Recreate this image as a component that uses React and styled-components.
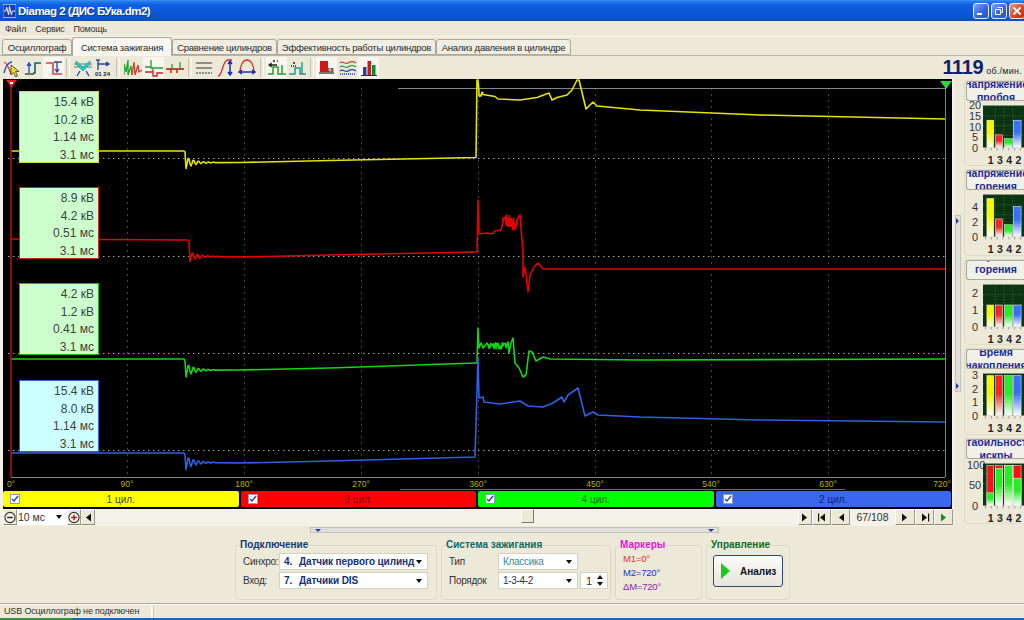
import React from "react";
import styled, { createGlobalStyle } from "styled-components";

const UI_FONT = '"Liberation Sans", Arial, sans-serif';

const GlobalStyle = createGlobalStyle`
  html, body {
    margin: 0;
    padding: 0;
    background: #ece9d8;
    overflow: hidden;
  }
  * { box-sizing: border-box; }
`;

const Window = styled.div`
  width: 1024px;
  height: 620px;
  display: flex;
  flex-direction: column;
  background: #ece9d8;
  font-family: ${UI_FONT};
  font-size: 10px;
  color: #222;
  overflow: hidden;
`;

/* title bar */
const TitleBar = styled.div`
  height: 21px;
  flex: none;
  display: flex;
  align-items: center;
  padding: 0 0 0 3px;
  background: linear-gradient(180deg, #3c92f5 0, #1f74ee 2px, #0f5fe2 5px, #0b57d8 14px, #0a4ec8 100%);
`;
const TitleText = styled.div`
  margin-left: 2px;
  color: #fff;
  font-weight: 700;
  font-size: 11.5px;
  letter-spacing: -0.5px;
  white-space: nowrap;
  flex: 1;
  text-shadow: 1px 1px 0 #0a3a9a;
`;
const WinButtons = styled.div`
  display: flex;
  gap: 2px;
  margin-right: -1px;
`;
const WinButton = styled.div`
  width: 16px;
  height: 16px;
  border: 1px solid #e8eefc;
  border-radius: 3px;
  display: flex;
  align-items: center;
  justify-content: center;
  background: ${(p) =>
    p.$close
      ? "linear-gradient(135deg, #ee9a80, #d8431c 60%, #c03010)"
      : "linear-gradient(135deg, #7ea6f0, #2f62dc 60%, #2a55c8)"};
`;

/* menu */
const MenuBar = styled.div`
  height: 16px;
  flex: none;
  display: flex;
  align-items: center;
  padding: 1px 0 0 5px;
  gap: 9px;
  border-bottom: 1px solid #f8f6ee;
`;
const MenuItem = styled.span`
  font-size: 9px;
  letter-spacing: -0.25px;
  color: #333;
`;

/* tabs */
const TabStrip = styled.div`
  height: 19px;
  flex: none;
  display: flex;
  align-items: flex-end;
  padding-left: 2px;
  border-bottom: 1px solid #b8b5a4;
`;
const Tab = styled.div`
  width: ${(p) => p.$w}px;
  height: ${(p) => (p.$active ? 19 : 16)}px;
  display: flex;
  align-items: center;
  justify-content: center;
  font-size: 9.5px;
  letter-spacing: -0.25px;
  color: #2a2a2a;
  background: ${(p) => (p.$active ? "#f8f7f0" : "#f0eee3")};
  border: 1px solid #aca899;
  border-bottom: ${(p) => (p.$active ? "none" : "1px solid #aca899")};
  border-radius: 3px 3px 0 0;
  margin-bottom: ${(p) => (p.$active ? -1 : 0)}px;
  white-space: nowrap;
`;

/* toolbar */
const Toolbar = styled.div`
  height: 23px;
  flex: none;
  display: flex;
  align-items: center;
  padding-left: 1px;
`;
const ToolButton = styled.div`
  width: 21px;
  height: 21px;
  display: flex;
  align-items: center;
  justify-content: center;
  background: ${(p) => (p.$active ? "#f7f6f0" : "transparent")};
`;
const ToolSep = styled.div`
  width: ${(p) => p.$w}px;
  height: 19px;
  display: flex;
  justify-content: center;
  &::after {
    content: "";
    width: 2px;
    height: 100%;
    border-left: 1px solid #c6c3b2;
    border-right: 1px solid #fbfaf4;
  }
`;
const Rpm = styled.div`
  margin-left: auto;
  margin-right: 2px;
  display: flex;
  align-items: baseline;
  gap: 3px;
`;
const RpmValue = styled.span`
  font-size: 20px;
  font-weight: 700;
  color: #10206e;
  letter-spacing: -0.4px;
`;
const RpmUnit = styled.span`
  font-size: 9px;
  letter-spacing: 0.25px;
  color: #223;
`;

/* main area */
const MainRow = styled.div`
  height: 447px;
  flex: none;
  display: flex;
`;
const ChartColumn = styled.div`
  width: 954px;
  flex: none;
  padding-left: 3px;
  display: flex;
  flex-direction: column;
  background: #f3f1e8;
`;
const Plot = styled.div`
  position: relative;
  width: 949px;
  height: 411px;
  flex: none;
  background: #000;
  svg { display: block; }
`;
const InfoBox = styled.div`
  position: absolute;
  left: 16px;
  top: ${(p) => p.$top}px;
  width: 80px;
  height: 72px;
  padding: 2px 4px 0 0;
  background: ${(p) => p.$bg};
  border: 1px solid ${(p) => p.$color};
  text-align: right;
  font-size: 12px;
  line-height: 17.7px;
  color: #404040;
`;
const AxisLabel = styled.text`
  font-family: ${UI_FONT};
  font-size: 8.5px;
  fill: #b5b500;
  text-anchor: middle;
`;

const ChannelBar = styled.div`
  width: 949px;
  height: 19px;
  flex: none;
  display: flex;
  gap: 2px;
  padding: 1px 1px 2px 0;
  background: #000;
`;
const Channel = styled.div`
  flex: 1;
  position: relative;
  display: flex;
  align-items: center;
  justify-content: center;
  background: ${(p) => p.$color};
  border-radius: 2px;
  font-size: 10px;
  color: ${(p) => p.$text};
`;
const Check = styled.div`
  position: absolute;
  left: 7px;
  top: 3px;
  width: 10px;
  height: 10px;
  background: #fff;
  border: 1px solid #8a9ac0;
  display: flex;
  align-items: center;
  justify-content: center;
`;

const PlayRow = styled.div`
  height: 16px;
  flex: none;
  display: flex;
  align-items: stretch;
  width: 950px;
`;
const PlayButton = styled.div`
  width: ${(p) => p.$w || 14}px;
  flex: none;
  display: flex;
  align-items: center;
  justify-content: center;
  background: #ece9d8;
  border: 1px solid;
  border-color: #fff #9c9a8a #8a8878 #fff;
`;
const TimeSelect = styled.div`
  width: 50px;
  flex: none;
  display: flex;
  align-items: center;
  justify-content: space-between;
  padding: 0 5px 0 1px;
  background: #fff;
  font-size: 10.5px;
  color: #333;
`;
const SliderTrack = styled.div`
  flex: 1;
  position: relative;
`;
const SliderThumb = styled.div`
  width: 13px;
  height: 14px;
  background: #ece9d8;
  border: 1px solid;
  border-color: #fff #777 #777 #fff;
`;
const FrameCount = styled.div`
  width: 45px;
  flex: none;
  display: flex;
  align-items: center;
  justify-content: center;
  font-size: 10.5px;
  color: #333;
`;

const VSplit = styled.div`
  align-self: center;
  width: 6px;
  height: 177px;
  margin: 1px 3px 0 1px;
  flex: none;
  padding: 2px 0;
  background: #dfdedb;
  border: 1px solid #c4c2b4;
  display: flex;
  flex-direction: column;
  justify-content: space-between;
`;
const VSplitArrow = styled.div`
  width: 0;
  height: 0;
  border-top: 3px solid transparent;
  border-bottom: 3px solid transparent;
  border-left: 3px solid #2a3aa0;
`;

const SidePanel = styled.div`
  flex: 1;
  display: flex;
  flex-direction: column;
  gap: 3px;
  padding-top: 1px;
  overflow: hidden;
`;
const GaugeCard = styled.div`
  height: 86.4px;
  flex: none;
  padding-left: 1px;
  border: 1px solid #dedbc9;
  border-right: none;
  border-radius: 4px 0 0 4px;
`;
const GaugeHeader = styled.div`
  width: 59px;
  height: 20px;
  display: flex;
  flex-direction: column;
  align-items: center;
  justify-content: center;
  overflow: hidden;
  background: #f2f1e9;
  border: 1px solid #a9a795;
  border-right: none;
  border-radius: 3px 0 0 3px;
  font-size: 10.5px;
  font-weight: 700;
  line-height: 13px;
  color: #1c2a98;
  span { flex: none; white-space: nowrap; }
`;
const GaugeBody = styled.div`
  display: flex;
  margin: 4px 0 0 1px;
`;
const AxisColumn = styled.div`
  width: 16px;
  height: 43px;
  flex: none;
  display: flex;
  flex-direction: column;
  justify-content: space-between;
  padding-top: ${(p) => p.$top || 0}px;
  font-size: 11px;
  color: #333;
  text-align: center;
  span { height: 0; line-height: 0; }
`;
const BarLabels = styled.div`
  display: grid;
  grid-template-columns: repeat(4, 9.3px);
  margin: 3px 0 0 20px;
  font-size: 10.5px;
  font-weight: 700;
  line-height: 12px;
  text-align: center;
  color: #222;
`;

/* bottom area */
const BottomArea = styled.div`
  height: 77px;
  flex: none;
  display: flex;
  flex-direction: column;
`;
const HSplit = styled.div`
  width: 409px;
  height: 6px;
  margin: 1px 0 0 310px;
  flex: none;
  background: #dfdedb;
  border: 1px solid #c4c2b4;
  display: flex;
  align-items: center;
  justify-content: space-between;
  padding: 0 4px;
`;
const SplitArrow = styled.div`
  width: 0;
  height: 0;
  border-left: 3px solid transparent;
  border-right: 3px solid transparent;
  border-top: 3px solid #2a3aa0;
`;
const GroupRow = styled.div`
  display: flex;
  gap: 4px;
  padding: 6px 0 0 235px;
`;
const Group = styled.fieldset`
  width: ${(p) => p.$w}px;
  height: 61px;
  margin: 0;
  padding: 2px 5px 0 7px;
  border: 1px solid #dad7c5;
  border-radius: 4px;
  box-shadow: inset 0 0 0 1px #efedde;
  min-width: 0;
`;
const GroupTitle = styled.legend`
  padding: 0;
  margin-left: -3px;
  font-size: 10px;
  line-height: 12px;
  font-weight: 700;
  color: ${(p) => p.$color};
`;
const FieldGrid = styled.div`
  display: grid;
  grid-template-columns: ${(p) => p.$label}px auto;
  row-gap: 2px;
  align-items: center;
  font-size: 10px;
  letter-spacing: -0.3px;
  color: #333;
`;
const OrderRow = styled.div`
  display: flex;
  gap: 2px;
`;
const Combo = styled.div`
  width: ${(p) => p.$w}px;
  height: 17px;
  flex: none;
  display: flex;
  align-items: center;
  justify-content: space-between;
  padding: 0 5px 0 4px;
  background: #fff;
  border: 1px solid #d4d1c0;
  font-size: 10px;
  color: ${(p) => p.$color || "#333"};
  white-space: nowrap;
  overflow: hidden;
`;
const ComboValue = styled.span`
  display: flex;
  font-weight: 700;
  font-size: 10px;
  letter-spacing: -0.1px;
  color: #14307a;
`;
const ComboNumber = styled.span`
  width: 15px;
`;
const DownArrow = styled.span`
  flex: none;
  width: 0;
  height: 0;
  border-left: 3.5px solid transparent;
  border-right: 3.5px solid transparent;
  border-top: 4px solid #111;
`;
const Spinner = styled.div`
  width: 28px;
  height: 17px;
  display: flex;
  align-items: center;
  justify-content: space-between;
  padding: 0 4px 0 5px;
  background: #fff;
  border: 1px solid #d4d1c0;
  font-size: 11px;
  color: #333;
`;
const SpinArrows = styled.div`
  display: flex;
  flex-direction: column;
  gap: 3px;
  &::before, &::after {
    content: "";
    width: 0;
    height: 0;
    border-left: 3.5px solid transparent;
    border-right: 3.5px solid transparent;
  }
  &::before { border-bottom: 4px solid #111; }
  &::after { border-top: 4px solid #111; }
`;
const MarkerList = styled.div`
  display: flex;
  flex-direction: column;
  gap: 3px;
`;
const Marker = styled.div`
  font-size: 9.5px;
  line-height: 11px;
  letter-spacing: -0.2px;
  color: ${(p) => p.$color};
`;
const AnalyzeButton = styled.div`
  width: 70px;
  height: 32px;
  margin: 2px 0 0 -1px;
  display: flex;
  align-items: center;
  gap: 9px;
  padding-left: 7px;
  background: linear-gradient(180deg, #fcfcfa, #e6e4da);
  border: 1px solid #2c4a70;
  border-radius: 3px;
  font-size: 10px;
  font-weight: 700;
  color: #111;
`;

/* status */
const StatusBar = styled.div`
  height: 15px;
  flex: none;
  display: flex;
  border-top: 1px solid #aca899;
  box-shadow: inset 0 1px 0 #fff;
  padding-top: 2px;
`;
const StatusCell = styled.div`
  width: 153px;
  flex: none;
  padding-left: 4px;
  font-size: 9px;
  line-height: 11px;
  letter-spacing: -0.15px;
  white-space: nowrap;
  color: #333;
  border-right: 2px solid #fbfaf4;
  box-shadow: 1px 0 0 #c8c5b4;
`;
const TaskStrip = styled.div`
  height: 2px;
  flex: none;
  background: linear-gradient(90deg, #3d8f3d 0, #3d8f3d 72px, #2a62b8 73px, #2a62b8 100%);
`;

/* waveform data in page pixels */
const ring = (x, base, amp, len) =>
  Array.from({ length: len }, (_, i) => [
    x + i,
    +(base + amp * Math.exp(-i / 9) * Math.cos((2 * Math.PI * i) / 5)).toFixed(1),
  ]);
const jitter = (x0, x1, top, bottom) => {
  const out = [];
  for (let x = x0; x <= x1; x += 0.5) {
    const r = Math.sin(x * 12.9898) * 43758.5453;
    out.push([x, +(top + (bottom - top) * (r - Math.floor(r))).toFixed(1)]);
  }
  return out;
};
const traces = [
  {
    color: "#e4e400",
    points: [
      [11, 151], [184, 151], [185, 152],
      ...ring(186, 162.5, 6, 30),
      [240, 162.5], [330, 160.5], [476, 157.5], [477, 80], [478, 80], [479, 92],
      ...jitter(479, 483, 92, 97),
      [495, 96.5], [498, 99], [520, 100], [537, 97.5], [549, 93], [552, 100], [557, 97.5], [567, 95],
      [572, 90], [577, 80], [579, 80], [586, 109], [593, 102], [597, 106], [640, 110], [760, 115], [945, 119],
    ],
  },
  {
    color: "#e60000",
    points: [
      [11, 239], [188, 240], [189, 241],
      ...ring(190, 256.5, 5, 30),
      [240, 257], [330, 255], [476, 252], [477, 252], [478, 200], [479, 234], [487, 233], [492, 234], [495, 231], [501, 230], [503, 222],
      ...jitter(503, 511, 215, 227),
      ...jitter(511, 517, 218, 231),
      [518, 218], [520, 215], [523, 253], [523, 277], [525, 267], [528, 292], [530, 275], [534, 267], [538, 263], [543, 269],
      [640, 269], [945, 269],
    ],
  },
  {
    color: "#12d612",
    points: [
      [11, 359], [184, 359], [185, 361],
      ...ring(186, 370, 7, 30),
      [240, 370], [330, 368], [476, 363], [477, 363], [478, 328], [479, 348], [481, 343], [483, 348], [487, 343],
      ...jitter(488, 506, 342, 349),
      [508, 342], [509, 353], [511, 343], [513, 338], [515, 363], [519, 368], [523, 377], [526, 375], [529, 351], [532, 352], [536, 361], [543, 357], [550, 359],
      [640, 360], [945, 359],
    ],
  },
  {
    color: "#2c60e6",
    points: [
      [11, 453], [184, 453], [185, 455],
      ...ring(186, 462.5, 7, 30),
      [240, 463], [330, 461], [475, 457], [478, 357], [479, 398], [483, 397], [484, 402], [500, 404], [520, 401], [528, 406], [543, 407], [553, 403],
      [562, 397], [564, 402], [568, 395], [578, 388], [585, 416], [593, 412], [598, 415], [640, 417], [760, 420], [945, 422],
    ],
  },
];
const toPoints = (pts) => pts.map((p) => p.join(",")).join(" ");

const gridX = [127, 244, 361, 478, 595, 711, 828];
const dotY = [158.5, 256.5, 353.5, 450.5];
const degrees = [
  [11, "0°"], [127, "90°"], [244, "180°"], [361, "270°"], [478, "360°"],
  [595, "450°"], [711, "540°"], [828, "630°"], [945, "720°"],
];

const infoBoxes = [
  { top: 12, color: "#d8d820", bg: "#ccffcc", lines: ["15.4 кВ", "10.2 кВ", "1.14 мс", "3.1 мс"] },
  { top: 108, color: "#d02020", bg: "#ccffcc", lines: ["8.9 кВ", "4.2 кВ", "0.51 мс", "3.1 мс"] },
  { top: 204, color: "#10c010", bg: "#ccffcc", lines: ["4.2 кВ", "1.2 кВ", "0.41 мс", "3.1 мс"] },
  { top: 301, color: "#3060d8", bg: "#ccffff", lines: ["15.4 кВ", "8.0 кВ", "1.14 мс", "3.1 мс"] },
];

const channels = [
  { name: "1 цил.", color: "#ffff00", text: "#444" },
  { name: "3 цил.", color: "#ff0000", text: "#7a1010" },
  { name: "4 цил.", color: "#00ff00", text: "#1a6a1a" },
  { name: "2 цил.", color: "#3a66f0", text: "#14246a" },
];

const PlotDrawing = () => (
  <svg width="949" height="411" viewBox="3 79 949 411">
    {gridX.map((x) => (
      <line key={x} x1={x + 0.5} x2={x + 0.5} y1="88" y2="477" stroke="#444" strokeDasharray="2 4" />
    ))}
    {dotY.map((y) => (
      <line key={y} x1="8" x2="945" y1={y} y2={y} stroke="#a0a0a0" strokeDasharray="1.5 3.5" />
    ))}
    <line x1="398" x2="945" y1="88.5" y2="88.5" stroke="#858585" />
    <line x1="11" x2="945" y1="477.5" y2="477.5" stroke="#858585" />
    <line x1="400" x2="845" y1="489.5" y2="489.5" stroke="#6a6a6a" />
    {traces.map((t) => (
      <polyline key={t.color} points={toPoints(t.points)} fill="none" stroke={t.color} strokeWidth="1.6" strokeLinejoin="round" />
    ))}
    <line x1="11" x2="11" y1="84" y2="477" stroke="#b01010" strokeWidth="1.6" />
    <polygon points="6,80 17,80 11.5,88" fill="#e02020" />
    <rect x="10" y="82" width="3" height="2" fill="#fff" />
    <line x1="945.5" x2="945.5" y1="86" y2="477" stroke="#2db52d" />
    <polygon points="940,81 952,81 946,89" fill="#30d040" />
    {degrees.map(([x, label]) => (
      <AxisLabel key={label} x={x + (x === 945 ? -3 : 0)} y="487">{label}</AxisLabel>
    ))}
  </svg>
);

/* toolbar icons, drawn in an 18x18 box */
const s = { fill: "none", strokeWidth: 1.3 };
const toolIcons = [
  <g {...s}>
    <path d="M1 14C3 6 6 3 9 3" stroke="#2a4fc0" />
    <path d="M1 3C4 4 6 9 8 15" stroke="#d03020" />
    <path d="M8 6v10l2.5-2.5 2 4.5 2-1-2-4.5h3.5z" fill="#f5e020" stroke="#333" strokeWidth=".8" />
  </g>,
  <g {...s}>
    <path d="M9 14h2V4h6" stroke="#106868" strokeWidth="1.6" />
    <path d="M1 15h9" stroke="#333" />
    <path d="M5 14V5M3 7l2-3 2 3" stroke="#2040c0" />
  </g>,
  <g {...s}>
    <path d="M1 4h7v11h9" stroke="#d84040" strokeWidth="1.6" />
    <path d="M9 3h8" stroke="#333" />
    <path d="M12 3v9M10 10l2 3 2-3" stroke="#2040c0" />
  </g>,
  <g {...s}>
    <path d="M0 5h18M0 8h18" stroke="#555" strokeWidth=".8" />
    <path d="M2 2l7 6 7-6v3l-7 7-7-7z" fill="#28c8c8" stroke="#109090" strokeWidth=".6" />
    <path d="M6 12l-3 5M12 12l3 5" stroke="#2040c0" />
  </g>,
  <g {...s}>
    <path d="M3 1v10M3 5h11M11 3l3 2-3 2" stroke="#2040a0" />
    <path d="M1 1h4" stroke="#2040a0" />
    <text x="0" y="17" fontSize="6" fontWeight="700" fontFamily={UI_FONT} fill="#223" stroke="none">01 24</text>
  </g>,
  <g {...s}>
    <path d="M0 16V5l2 8 2-12v15l3-9 1 9" stroke="#20a030" />
    <path d="M8 16l2-13 1 13 3-10 1 7 3-2" stroke="#d04030" />
  </g>,
  <g {...s}>
    <path d="M0 8h6V1v8h12" stroke="#20a030" />
    <path d="M0 13h8v-3 7h4v-3h6" stroke="#d02020" />
  </g>,
  <g {...s}>
    <path d="M0 10h6V5v5h8V3v7h4" stroke="#20a030" />
    <path d="M0 10h5v4-4h6v4-4h7" stroke="#d03020" strokeWidth="1.6" />
  </g>,
  <g {...s}>
    <path d="M0 4h16M0 9h16" stroke="#333" strokeWidth="1.2" />
    <path d="M0 14h16" stroke="#333" strokeWidth="1.2" strokeDasharray="2 1" />
  </g>,
  <g {...s}>
    <path d="M1 17C6 17 5 1 11 1h4" stroke="#d83030" />
    <path d="M13 3v12M11 5l2-3 2 3M11 13l2 3 2-3" stroke="#1830c0" strokeWidth="1.5" />
  </g>,
  <g {...s}>
    <path d="M2 14C2 6 5 1 9 1s7 5 7 13" stroke="#d83030" />
    <path d="M2 13h14M4 11l-3 2 3 2M14 11l3 2-3 2" stroke="#1830c0" strokeWidth="1.5" />
  </g>,
  <g {...s}>
    <path d="M0 15h5V8h5v7h4V6v9h4" stroke="#20a030" strokeWidth="1.5" />
    <path d="M2 6h7M1 6l2-1.5V7.500z" stroke="#222" />
    <path d="M5 2h2M9 2h1" stroke="#222" />
  </g>,
  <g {...s}>
    <path d="M0 15h6V9h5v6h2V3v12h4" stroke="#189a90" strokeWidth="1.4" />
    <path d="M2 7h6" stroke="#222" strokeDasharray="1 1" />
    <path d="M4 4h2" stroke="#222" />
  </g>,
  <g {...s}>
    <path d="M2 2h8v11H2z" fill="#d01818" stroke="none" />
    <path d="M1 14h15" stroke="#333" />
    <text x="9" y="13" fontSize="6" fontWeight="700" fontFamily={UI_FONT} fill="#222" stroke="none">18</text>
  </g>,
  <g {...s}>
    <path d="M1 4c3-3 5 2 8 0s5-2 8 0" stroke="#d04040" />
    <path d="M1 8c3-3 5 2 8 0s5-2 8 0" stroke="#2ca040" />
    <path d="M1 12c3-3 5 2 8 0s5-2 8 0" stroke="#2040c0" />
    <path d="M1 15h16" stroke="#2040c0" strokeDasharray="1 1" />
  </g>,
  <g>
    <rect x="3" y="8" width="3.500" height="8" fill="#2040b0" />
    <rect x="7.500" y="2" width="3.500" height="14" fill="#d01818" />
    <rect x="12" y="6" width="3.500" height="10" fill="#108a30" />
    <rect x="1" y="16" width="16" height="1" fill="#333" />
  </g>,
];
const toolLayout = [
  [0, 3, 8],
  [3, 2, 8],
  [5, 3, 9],
  [8, 3, 9],
  [11, 2, 8],
  [13, 3, 0],
];
const activeTools = [2, 6, 11, 13, 15];

const ToolIcon = ({ index }) => (
  <ToolButton $active={activeTools.includes(index)}>
    <svg width="18" height="18" viewBox="0 0 18 18">{toolIcons[index]}</svg>
  </ToolButton>
);

/* gauges */
const barX = [4, 13, 22, 31];
const barW = [7, 7, 8, 8];
const barColors = ["yellow", "red", "green", "blue"];
const gradColors = { yellow: "#f6f600", red: "#f02828", green: "#22ee22", blue: "#3a70f0" };

const Gradients = () => (
  <svg width="0" height="0" style={{ position: "absolute" }}>
    <defs>
      {Object.entries(gradColors).map(([name, color]) => (
        <linearGradient key={name} id={`bar-${name}`} x1="0" x2="0" y1="0" y2="1">
          <stop offset="0" stopColor={color} />
          <stop offset="0.45" stopColor={color} />
          <stop offset="1" stopColor="#fff" />
        </linearGradient>
      ))}
    </defs>
  </svg>
);

const GaugeChart = ({ bars, stacked }) => (
  <svg width="42" height="46" viewBox="0 0 42 46">
    <rect width="42" height="43" fill="#0c3312" />
    {[10, 20, 30].map((y) => (
      <line key={y} x1="0" x2="42" y1={y + 0.5} y2={y + 0.5} stroke="#3a7a45" strokeDasharray="1 2" />
    ))}
    {[12, 21, 30].map((x) => (
      <line key={x} x1={x + 0.5} x2={x + 0.5} y1="0" y2="43" stroke="#3a7a45" strokeDasharray="1 2" />
    ))}
    {[2, 8, 14, 20, 26, 32, 38].map((x) => (
      <line key={x} x1={x + 0.5} x2={x + 0.5} y1="43" y2="46" stroke="#999" />
    ))}
    {bars.map((h, i) =>
      stacked ? (
        <g key={i}>
          <rect x={barX[i]} y="2" width={barW[i]} height="41" fill="#f01414" stroke="#fff" strokeWidth=".5" />
          <rect x={barX[i]} y={43 - h} width={barW[i]} height={h} fill="url(#bar-green)" stroke="#fff" strokeWidth=".5" />
        </g>
      ) : (
        <rect key={i} x={barX[i]} y={43 - h} width={barW[i]} height={h} fill={`url(#bar-${barColors[i]})`} stroke="#fff" strokeWidth=".5" />
      )
    )}
  </svg>
);

const gauges = [
  { title: ["Напряжение", "пробоя"], axis: ["20", "15", "10", "5", "0"], bars: [28, 13, 9, 28] },
  { title: ["Напряжение", "горения"], axis: ["4", "2", "0"], top: 13, bars: [39, 18, 12, 31] },
  { title: ["Время", "горения", "\u00a0"], axis: ["2", "1", "0"], top: 9, bars: [22, 22, 22, 22] },
  { title: ["Время", "накопления"], axis: ["3", "2", "1", "0"], top: 2, bars: [41, 41, 41, 41] },
  { title: ["Стабильность", "искры"], axis: ["100", "50", "0"], top: 2, bars: [13, 38, 41, 28], stacked: true },
];

const Arrow = ({ dir = "right", color = "#111", bar }) => (
  <svg width="10" height="9" viewBox="0 0 10 9">
    <polygon points={dir === "right" ? "2,0.5 7,4.500 2,8.500" : "8,0.5 3,4.500 8,8.500"} fill={color} />
    {bar && <rect x={dir === "right" ? 8 : 1} y="0.500" width="1.200" height="8" fill={color} />}
  </svg>
);

const RoundIcon = ({ plus }) => (
  <svg width="13" height="13" viewBox="0 0 13 13">
    <circle cx="6.500" cy="6.500" r="5.500" fill="#f4f2ea" stroke="#333" strokeWidth="1.200" />
    <path d={plus ? "M3.500 6.500h6M6.500 3.500v6" : "M3.500 6.500h6"} stroke={plus ? "#c01010" : "#222"} strokeWidth="1.500" />
  </svg>
);

const App = () => {
  const frame = 67;
  const total = 108;
  const thumbOffset = ((frame - 1) / (total - 1)) * 691;

  return (
    <>
      <GlobalStyle />
      <Gradients />
      <Window>
        <TitleBar>
          <svg width="13" height="14" viewBox="0 0 14 14">
            <rect width="14" height="14" fill="#1c3fa8" stroke="#9ab8f0" />
            <path d="M1 7h2l1-4 2 8 1-9 2 9 1-4h3" fill="none" stroke="#fff" />
          </svg>
          <TitleText>Diamag 2 (ДИС БУка.dm2)</TitleText>
          <WinButtons>
            <WinButton>
              <svg width="10" height="10" viewBox="0 0 10 10"><rect x="1" y="7" width="5" height="2" fill="#fff" /></svg>
            </WinButton>
            <WinButton>
              <svg width="10" height="10" viewBox="0 0 10 10">
                <path d="M3.500 1.500h5v5h-2M1.500 3.500h5v5h-5z" fill="none" stroke="#fff" />
              </svg>
            </WinButton>
            <WinButton $close>
              <svg width="10" height="10" viewBox="0 0 10 10">
                <path d="M1.500 1.500l7 7M8.500 1.500l-7 7" stroke="#fff" strokeWidth="1.800" />
              </svg>
            </WinButton>
          </WinButtons>
        </TitleBar>

        <MenuBar>
          <MenuItem>Файл</MenuItem>
          <MenuItem>Сервис</MenuItem>
          <MenuItem>Помощь</MenuItem>
        </MenuBar>

        <TabStrip>
          <Tab $w={70}>Осциллограф</Tab>
          <Tab $w={100} $active>Система зажигания</Tab>
          <Tab $w={105}>Сравнение цилиндров</Tab>
          <Tab $w={159}>Эффективность работы цилиндров</Tab>
          <Tab $w={135}>Анализ давления в цилиндре</Tab>
        </TabStrip>

        <Toolbar>
          {toolLayout.map(([start, count, sep]) => (
            <React.Fragment key={start}>
              {Array.from({ length: count }, (_, i) => (
                <ToolIcon key={i} index={start + i} />
              ))}
              {sep > 0 && <ToolSep $w={sep} />}
            </React.Fragment>
          ))}
          <Rpm>
            <RpmValue>1119</RpmValue>
            <RpmUnit>об./мин.</RpmUnit>
          </Rpm>
        </Toolbar>

        <MainRow>
          <ChartColumn>
            <Plot>
              <PlotDrawing />
              {infoBoxes.map((box) => (
                <InfoBox key={box.top} $top={box.top} $color={box.color} $bg={box.bg}>
                  {box.lines.map((line, i) => (
                    <div key={i}>{line}</div>
                  ))}
                </InfoBox>
              ))}
            </Plot>
            <ChannelBar>
              {channels.map((ch) => (
                <Channel key={ch.name} $color={ch.color} $text={ch.text}>
                  <Check>
                    <svg width="8" height="8" viewBox="0 0 8 8">
                      <path d="M1 4l2 2 4-5" fill="none" stroke="#2a4ab8" strokeWidth="1.500" />
                    </svg>
                  </Check>
                  {ch.name}
                </Channel>
              ))}
            </ChannelBar>
            <PlayRow>
              <PlayButton><RoundIcon /></PlayButton>
              <TimeSelect>10 мс<DownArrow /></TimeSelect>
              <PlayButton><RoundIcon plus /></PlayButton>
              <PlayButton><Arrow dir="left" /></PlayButton>
              <SliderTrack>
                <SliderThumb style={{ marginLeft: thumbOffset }} />
              </SliderTrack>
              <PlayButton><Arrow /></PlayButton>
              <PlayButton $w={19}><Arrow dir="left" bar /></PlayButton>
              <PlayButton $w={19}><Arrow dir="left" /></PlayButton>
              <FrameCount>{frame}/{total}</FrameCount>
              <PlayButton $w={20}><Arrow /></PlayButton>
              <PlayButton $w={19}><Arrow bar /></PlayButton>
              <PlayButton $w={19}><Arrow color="#118a20" /></PlayButton>
            </PlayRow>
          </ChartColumn>

          <VSplit><VSplitArrow /><VSplitArrow /></VSplit>

          <SidePanel>
            {gauges.map((g) => (
              <GaugeCard key={g.title.join(" ")}>
                <GaugeHeader>
                  {g.title.map((t, i) => (
                    <span key={i}>{t}</span>
                  ))}
                </GaugeHeader>
                <GaugeBody>
                  <AxisColumn $top={g.top}>
                    {g.axis.map((a) => (
                      <span key={a}>{a}</span>
                    ))}
                  </AxisColumn>
                  <GaugeChart bars={g.bars} stacked={g.stacked} />
                </GaugeBody>
                <BarLabels>
                  <span>1</span><span>3</span><span>4</span><span>2</span>
                </BarLabels>
              </GaugeCard>
            ))}
          </SidePanel>
        </MainRow>

        <BottomArea>
          <HSplit><SplitArrow /><SplitArrow /></HSplit>
          <GroupRow>
            <Group $w={202}>
              <GroupTitle $color="#123a78">Подключение</GroupTitle>
              <FieldGrid $label={36}>
                <span>Синхро:</span>
                <Combo $w={149}>
                  <ComboValue><ComboNumber>4.</ComboNumber>Датчик первого цилинд</ComboValue><DownArrow />
                </Combo>
                <span>Вход:</span>
                <Combo $w={149}>
                  <ComboValue><ComboNumber>7.</ComboNumber>Датчики DIS</ComboValue><DownArrow />
                </Combo>
              </FieldGrid>
            </Group>
            <Group $w={170}>
              <GroupTitle $color="#0a6a6a">Система зажигания</GroupTitle>
              <FieldGrid $label={49}>
                <span>Тип</span>
                <Combo $w={80} $color="#3a8a9a">Классика<DownArrow /></Combo>
                <span>Порядок</span>
                <OrderRow>
                  <Combo $w={80}>1-3-4-2<DownArrow /></Combo>
                  <Spinner>1<SpinArrows /></Spinner>
                </OrderRow>
              </FieldGrid>
            </Group>
            <Group $w={87}>
              <GroupTitle $color="#ee10d8">Маркеры</GroupTitle>
              <MarkerList>
                <Marker $color="#e03030">M1=0°</Marker>
                <Marker $color="#2a30c8">M2=720°</Marker>
                <Marker $color="#8a2a98">ΔM=720°</Marker>
              </MarkerList>
            </Group>
            <Group $w={84}>
              <GroupTitle $color="#106a20">Управление</GroupTitle>
              <AnalyzeButton>
                <svg width="10" height="16" viewBox="0 0 10 16">
                  <polygon points="0,0 9,8 0,16" fill="#18cc18" />
                </svg>
                Анализ
              </AnalyzeButton>
            </Group>
          </GroupRow>
        </BottomArea>

        <StatusBar>
          <StatusCell>USB Осциллограф не подключен</StatusCell>
        </StatusBar>
        <TaskStrip />
      </Window>
    </>
  );
};

export default App;
